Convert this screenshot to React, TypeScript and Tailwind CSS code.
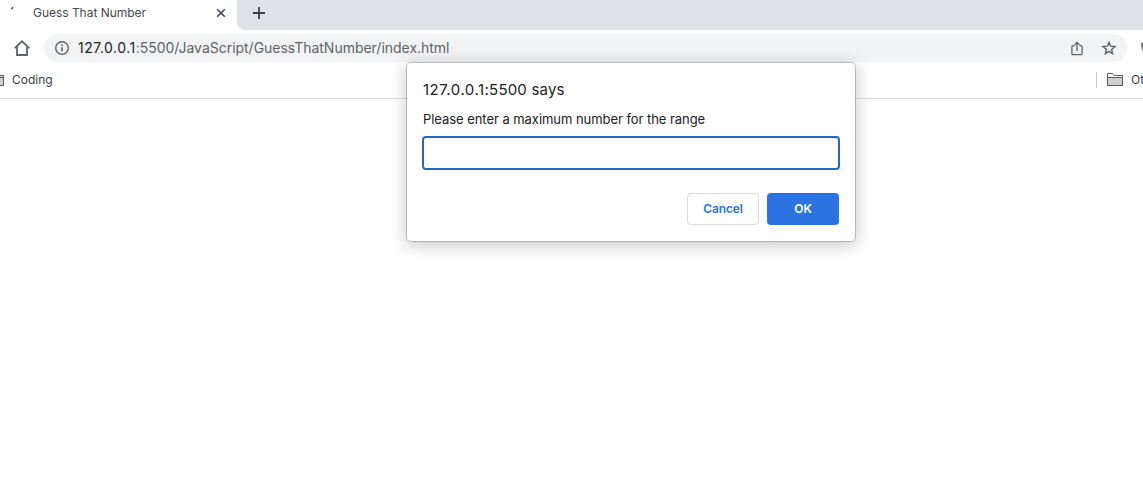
import React from "react";

function HomeIcon() {
  return (
    <svg className="h-5 w-5 shrink-0" viewBox="0 0 20 20" fill="none" stroke="#5f6368" strokeWidth="1.8">
      <path d="M2.8 10.2 10 3.3l7.2 6.9M5 9v8h10V9" />
    </svg>
  );
}

function InfoIcon() {
  return (
    <svg className="h-4 w-4 shrink-0" viewBox="0 0 16 16" fill="none" stroke="#5f6368" strokeWidth="1.4">
      <circle cx="8" cy="8" r="6.3" />
      <path d="M8 7.2v4M8 4.4v1.6" strokeWidth="1.7" />
    </svg>
  );
}

function ShareIcon() {
  return (
    <svg className="h-4 w-4 shrink-0" viewBox="0 0 16 16" fill="none" stroke="#5f6368" strokeWidth="1.3">
      <path d="M5.6 5.7H4a1.1 1.1 0 0 0-1.1 1.1v6.8A1.1 1.1 0 0 0 4 14.7h8a1.1 1.1 0 0 0 1.1-1.1V6.8A1.1 1.1 0 0 0 12 5.700h-1.600M8 11V2.400M5.600 4.700 8 2.300l2.400 2.400" />
    </svg>
  );
}

function StarIcon() {
  return (
    <svg className="h-4 w-4 shrink-0" viewBox="0 0 16 16" fill="none" stroke="#5f6368" strokeWidth="1.4">
      <path d="m8 2.4 1.55 3.8 4.45.35-3.4 2.85 1.05 4.25L8 11.4l-3.65 2.25 1.05-4.25L2 6.55l4.45-.35z" />
    </svg>
  );
}

function FolderIcon() {
  return (
    <svg className="h-4 w-4 shrink-0" viewBox="0 0 16 16" fill="none" stroke="#5b5b5b">
      <path d="M.5 13.500v-12h5l1.500 2h8.500v10z" fill="#fff" />
      <path d="M.5 5.500h15v8H.5z" fill="#cfcfcf" />
    </svg>
  );
}

function TabStrip() {
  return (
    <div className="flex h-[30px] bg-white">
      <div className="flex w-[237px] shrink-0 pt-[5px]">
        <svg className="ml-[10px] h-4 w-4 shrink-0" viewBox="0 0 16 16">
          <path d="m1.7 3.6.8-.9" stroke="#1a63c9" strokeWidth="1.6" strokeLinecap="round" />
        </svg>
        <span className="ml-[7px] w-[182px] text-[12px] leading-4 tracking-[-0.03px] text-[#45494d]">Guess That Number</span>
        <svg className="h-4 w-3 shrink-0" viewBox="0 0 12 16" stroke="#45494d" strokeWidth="1.6">
          <path d="m2.2 4.2 7.6 7.6M9.8 4.2l-7.6 7.6" />
        </svg>
      </div>
      <div className="flex flex-1 rounded-bl-[8px] bg-[#dee1e6] pt-[5px] pl-[14px]">
        <svg className="h-4 w-4" viewBox="0 0 16 16" stroke="#3c4043" strokeWidth="1.8">
          <path d="M8 2v12M2 8h12" />
        </svg>
      </div>
    </div>
  );
}

function Toolbar() {
  return (
    <div className="flex h-9 items-center overflow-hidden pl-3">
      <HomeIcon />
      <div className="ml-3 flex h-7 w-[1083px] shrink-0 items-center rounded-full bg-[#f1f3f4] px-[10px]">
        <InfoIcon />
        <span className="ml-2 flex-1 text-[14px] leading-5 tracking-[-0.02px] text-[#5f6368]">
          <span className="tracking-[0.5px] text-[#202124]">127.0.0.1</span>:5500/JavaScript/GuessThatNumber/index.html
        </span>
        <ShareIcon />
        <span className="w-4" />
        <StarIcon />
      </div>
      <svg className="ml-[13px] h-4 w-4 shrink-0" viewBox="0 0 16 16">
        <path d="M1 3 8 1v14C3 13 1 10 1 3z" fill="#777b7e" />
      </svg>
    </div>
  );
}

function Bookmarks() {
  return (
    <div className="flex h-[33px] items-start overflow-hidden border-b border-[#d8dadc] pt-[6px] text-[12px] leading-4 text-[#3c4043]">
      <svg className="h-4 w-1 shrink-0" viewBox="12 0 4 16" fill="none" stroke="#5b5b5b">
        <path d="M0 3.500h15.500v10H0z" fill="#cfcfcf" />
        <path d="M0 5.500h15" />
      </svg>
      <span className="ml-2 flex-1">Coding</span>
      <span className="h-4 w-px bg-[#c8cacd]" />
      <span className="flex w-[46px] shrink-0 pl-[10px]">
        <FolderIcon />
        <span className="ml-2 whitespace-nowrap">Other Bookmarks</span>
      </span>
    </div>
  );
}

function PromptDialog() {
  return (
    <div className="absolute top-[63px] left-[407px] flex h-[178px] w-[448px] flex-col rounded-[4px] bg-white px-[15px] pt-[17px] shadow-[0_0_0_1px_rgba(0,0,0,0.2),0_3px_16px_2px_rgba(0,0,0,0.2)]">
      <h1 className="pl-px text-[15px] leading-5 tracking-[0.2px] text-[#202124]">
        <span className="tracking-[0.5px]">127.0.0.1</span>:5500 says
      </h1>
      <p className="mt-[11px] pl-px text-[13px] leading-4 tracking-[-0.05px] text-[#202124]">Please enter a maximum number for the range</p>
      <input className="mt-[9px] h-[34px] w-[418px] shrink-0 rounded-[4px] border-2 border-[#2964c9] px-2 text-[13px] outline-none" />
      <div className="mt-[23px] flex justify-end gap-2 pr-px text-[12px] font-semibold">
        <button className="h-8 w-[72px] rounded-[4px] border border-[#dadce0] tracking-[-0.1px] text-[#2a73e0]">Cancel</button>
        <button className="h-8 w-[72px] rounded-[4px] bg-[#2a73e0] text-white">OK</button>
      </div>
    </div>
  );
}

export default function App() {
  return (
    <div className="relative h-[504px] w-[1143px] overflow-hidden bg-white font-['Inter','Liberation_Sans',sans-serif]">
      <TabStrip />
      <Toolbar />
      <Bookmarks />
      <PromptDialog />
    </div>
  );
}
